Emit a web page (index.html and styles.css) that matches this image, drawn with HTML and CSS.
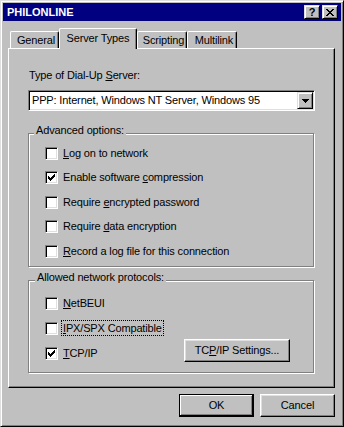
FILE: index.html
```html
<!DOCTYPE html>
<html>
<head>
<meta charset="utf-8">
<title>PHILONLINE</title>
<link rel="stylesheet" href="styles.css">
</head>
<body>
<div class="window">
  <div class="titlebar">
    <span class="title">PHILONLINE</span>
    <div class="tb-buttons">
      <span class="tb-btn tb-help">?</span>
      <span class="tb-btn tb-close">
        <svg width="8" height="7" viewBox="0 0 8 7" shape-rendering="crispEdges"><path fill="#000" d="M0 0h2v1h-2z M6 0h2v1h-2z M1 1h2v1h-2z M5 1h2v1h-2z M2 2h4v1h-4z M3 3h2v1h-2z M2 4h4v1h-4z M1 5h2v1h-2z M5 5h2v1h-2z M0 6h2v1h-2z M6 6h2v1h-2z"/></svg>
      </span>
    </div>
  </div>

  <div class="tabs">
    <div class="tab tab-general">General</div>
    <div class="tab tab-selected">Server Types</div>
    <div class="tab tab-scripting">Scripting</div>
    <div class="tab tab-multilink">Multilink</div>
  </div>

  <div class="panel">
    <div class="label">Type of Dial-Up <u>S</u>erver:</div>
    <div class="select">
      <span class="select-text">PPP: Internet, Windows NT Server, Windows 95</span>
      <span class="select-btn">
        <svg width="7" height="4" viewBox="0 0 7 4" shape-rendering="crispEdges"><path fill="#000" d="M0 0h7v1h-7z M1 1h5v1h-5z M2 2h3v1h-3z M3 3h1v1h-1z"/></svg>
      </span>
    </div>

    <div class="group group-adv">
      <div class="legend">Advanced options:</div>
      <div class="rows rows-adv">
        <div class="row"><span class="cb"></span><span><u>L</u>og on to network</span></div>
        <div class="row"><span class="cb"><svg width="11" height="11" viewBox="0 0 11 11" shape-rendering="crispEdges"><path fill="#000" d="M8 2h1v1h-1z M7 3h2v1h-2z M2 4h1v1h-1z M6 4h3v1h-3z M2 5h2v1h-2z M5 5h3v1h-3z M2 6h5v1h-5z M3 7h3v1h-3z M4 8h1v1h-1z"/></svg></span><span>Enable software <u>c</u>ompression</span></div>
        <div class="row"><span class="cb"></span><span>Require <u>e</u>ncrypted password</span></div>
        <div class="row"><span class="cb"></span><span>Require <u>d</u>ata encryption</span></div>
        <div class="row"><span class="cb"></span><span><u>R</u>ecord a log file for this connection</span></div>
      </div>
    </div>

    <div class="group group-proto">
      <div class="legend">Allowed network protocols:</div>
      <div class="rows rows-proto">
        <div class="row"><span class="cb"></span><span><u>N</u>etBEUI</span></div>
        <div class="row row-ipx"><span class="cb"></span><span class="focus"><u>I</u>PX/SPX Compatible</span></div>
        <div class="row-tcp">
          <div class="row row-tcp-check"><span class="cb"><svg width="11" height="11" viewBox="0 0 11 11" shape-rendering="crispEdges"><path fill="#000" d="M8 2h1v1h-1z M7 3h2v1h-2z M2 4h1v1h-1z M6 4h3v1h-3z M2 5h2v1h-2z M5 5h3v1h-3z M2 6h5v1h-5z M3 7h3v1h-3z M4 8h1v1h-1z"/></svg></span><span><u>T</u>CP/IP</span></div>
          <button class="btn btn-settings">TC<u>P</u>/IP Settings...</button>
        </div>
      </div>
    </div>
  </div>

  <div class="footer">
    <button class="btn btn-default">OK</button>
    <button class="btn">Cancel</button>
  </div>
</div>
</body>
</html>
```
FILE: styles.css
```css
* { box-sizing: border-box; }
html, body { margin: 0; padding: 0; }
body {
  width: 344px;
  height: 427px;
  background: #c0c0c0;
  font-family: "Liberation Sans", Arial, sans-serif;
  font-size: 11px;
  line-height: 13px;
  letter-spacing: -0.15px;
  color: #000;
  overflow: hidden;
}
u { text-decoration: underline; text-underline-offset: 1px; }

.window {
  width: 344px;
  height: 427px;
  border: 1px solid;
  border-color: #dfdfdf #000 #000 #dfdfdf;
  box-shadow: inset 1px 1px #fff, inset -1px -1px #808080;
  padding: 2px;
  background: #c0c0c0;
  display: flex;
  flex-direction: column;
}

.titlebar {
  height: 18px;
  flex: none;
  background: #000080;
  display: flex;
  align-items: center;
  padding: 0 3px 0 4px;
}
.title {
  flex: 1;
  color: #fff;
  font-weight: bold;
  letter-spacing: 0;
}
.tb-buttons { display: flex; gap: 2px; }
.tb-btn {
  width: 16px;
  height: 14px;
  border: 1px solid;
  border-color: #dfdfdf #000 #000 #dfdfdf;
  box-shadow: inset 1px 1px #fff, inset -1px -1px #808080;
  background: #c0c0c0;
  display: flex;
  align-items: center;
  justify-content: center;
}
.tb-help {
  font-weight: bold;
  font-size: 11px;
  line-height: 11px;
  letter-spacing: 0;
  padding-top: 1px;
}

.tabs {
  flex: none;
  height: 20px;
  margin-top: 7px;
  padding-left: 7px;
  display: flex;
  align-items: flex-end;
}
.tab {
  height: 17px;
  border: 1px solid;
  border-bottom: none;
  border-color: #fff #000 #000 #fff;
  border-radius: 2px 2px 0 0;
  box-shadow: inset -1px 0 #808080;
  padding-top: 2px;
  text-align: center;
  white-space: nowrap;
}
.tab-general { width: 49px; padding-left: 3px; }
.tab-selected {
  width: 78px;
  height: 21px;
  margin-bottom: -1px;
  padding-top: 3px;
  background: #c0c0c0;
  position: relative;
  z-index: 1;
}
.tab-scripting { width: 50px; padding-left: 3px; }
.tab-multilink { width: 50px; padding-left: 4px; }

.panel {
  flex: none;
  height: 340px;
  margin: 0 6px 0 5px;
  border: 1px solid;
  border-color: #fff #000 #000 #fff;
  box-shadow: inset -1px -1px #808080;
  padding: 20px 19px 0 19px;
}

.label { height: 13px; padding-left: 1px; }

.select {
  margin-top: 8px;
  height: 21px;
  border: 1px solid;
  border-color: #808080 #fff #fff #808080;
  box-shadow: inset 1px 1px #000, inset -1px -1px #dfdfdf;
  background: #fff;
  padding: 1px;
  display: flex;
  align-items: center;
}
.select-text { flex: 1; padding-left: 2px; white-space: nowrap; }
.select-btn {
  width: 16px;
  height: 17px;
  border: 1px solid;
  border-color: #dfdfdf #000 #000 #dfdfdf;
  box-shadow: inset 1px 1px #fff, inset -1px -1px #808080;
  background: #c0c0c0;
  display: flex;
  align-items: center;
  justify-content: center;
}

.group {
  margin-right: 1px;
  border: 1px solid #808080;
  box-shadow: 1px 1px 0 #fff, inset 1px 1px 0 #fff;
}
.group-adv { margin-top: 22px; padding-bottom: 8px; }
.group-proto { margin-top: 13px; padding-bottom: 10px; }
.legend {
  width: fit-content;
  margin: -10px 0 0 5px;
  padding: 0 2px;
  background: #c0c0c0;
  height: 13px;
}
.group-proto .legend { margin-left: 6px; }

.rows { display: flex; flex-direction: column; padding-left: 16px; }
.rows-adv { margin-top: 10px; gap: 11.4px; }
.rows-proto { margin-top: 13px; }
.row {
  display: flex;
  align-items: center;
  gap: 5px;
  height: 13px;
  white-space: nowrap;
}
.row-ipx { margin-top: 12px; }
.focus {
  border: 1px dotted #000;
  padding: 0 1px;
  margin-left: -2px;
  height: 16px;
  line-height: 14px;
}
.row-tcp {
  margin-top: 4px;
  display: flex;
  align-items: flex-start;
}
.row-tcp-check { margin-top: 8px; }

.cb {
  flex: none;
  width: 13px;
  height: 13px;
  border: 1px solid;
  border-color: #808080 #fff #fff #808080;
  box-shadow: inset 1px 1px #000, inset -1px -1px #dfdfdf;
  background: #fff;
}
.cb svg { display: block; }

.btn {
  width: 75px;
  height: 23px;
  padding: 0;
  margin: 0;
  border: 1px solid;
  border-color: #fff #000 #000 #fff;
  border-radius: 0;
  box-shadow: inset -1px -1px #808080, inset 1px 1px #dfdfdf;
  background: #c0c0c0;
  font-family: inherit;
  font-size: 11px;
  line-height: 13px;
  letter-spacing: -0.15px;
  color: #000;
  text-align: center;
}
.btn-settings { width: 106px; margin-left: auto; margin-right: 23px; }
.btn-default {
  border-color: #000;
  box-shadow: inset -1px -1px #000, inset 1px 1px #fff, inset -2px -2px #808080;
}

.footer {
  flex: none;
  margin-top: 6px;
  padding-right: 6px;
  display: flex;
  justify-content: flex-end;
  gap: 6px;
}
```
